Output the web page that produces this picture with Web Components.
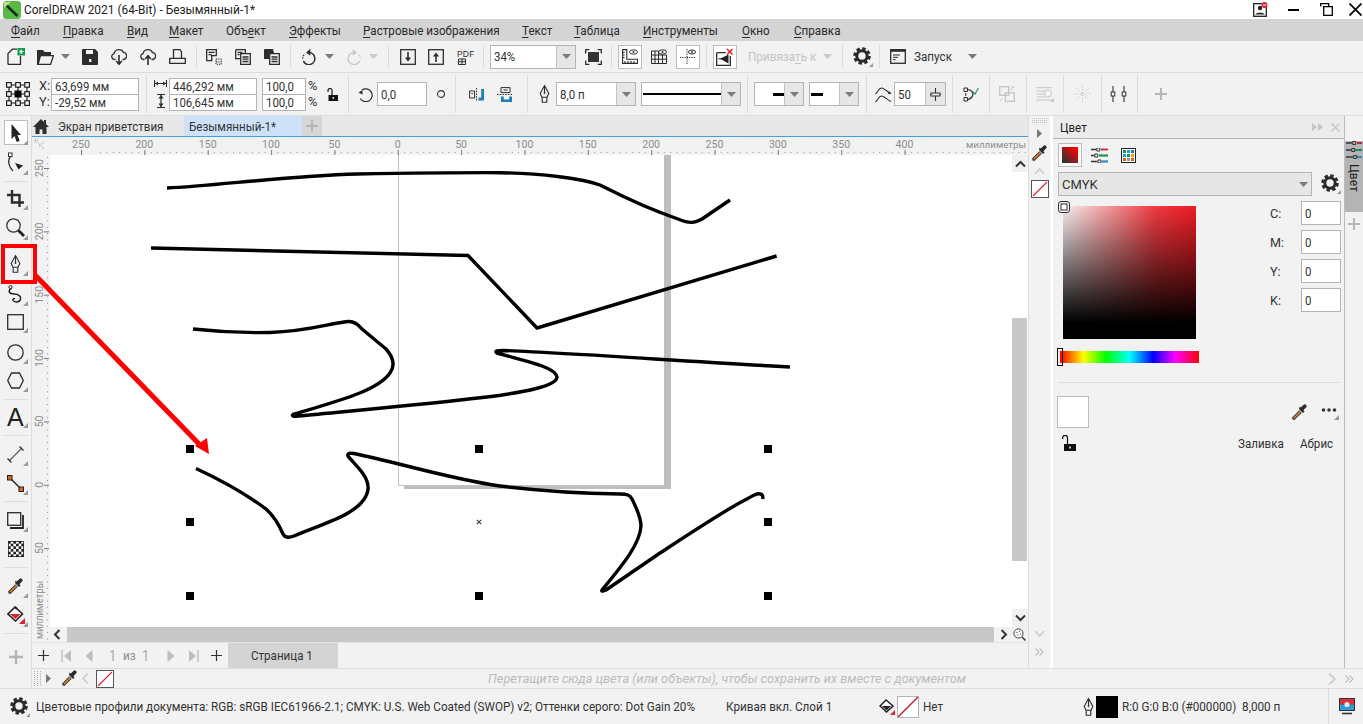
<!DOCTYPE html>
<html>
<head>
<meta charset="utf-8">
<title>CorelDRAW</title>
<style>
    html, body { margin: 0; padding: 0; width: 1363px; height: 724px; overflow: hidden; background: #f2f2f2; }
</style>
</head>
<body>
<cd-app></cd-app>
<script>
const D = '#2d2d2d';
const ln = `fill="none" stroke="${D}" stroke-width="1.3"`;
const dropper = `<path d="M2 15L9.5 7.5" stroke="#4a3018" stroke-width="3.4"/><path d="M2 15L9.5 7.5" stroke="#c98a4e" stroke-width="1.6"/><path d="M1 16l1.5-2.5 1 1z" fill="#333"/><path d="M8 5l4 4 1.6-1.6-1.2-1.2 2.6-2.6a1.8 1.8 0 0 0-2.6-2.6l-2.6 2.6-1.2-1.2z" fill="#2b2b2b"/>`;

const ICONS = {
    tri: [ 9, 5, `<path d="M0 0h9L4.5 5z" fill="#7b7b7b"/>` ],
    triL: [ 9, 5, `<path d="M0 0h9L4.5 5z" fill="#c9c9c9"/>` ],
    new: [ 18, 17, `<path d="M1 16.5V5.5L5.5 1.2H10M13.5 8v8.5H1" ${ln}/><rect x="10.5" y="0" width="7.5" height="7.5" fill="#0f9d4c"/><path d="M14.2 1.5v4.5M12 3.7h4.5" stroke="#fff" stroke-width="1.3"/>` ],
    open: [ 17, 16, `<path d="M0 16V1h6l1.5 2H14v3H4.3L1.6 16z" fill="${D}"/><path d="M3.8 6.7H16.4L13.6 15.4H1" ${ln}/>` ],
    save: [ 16, 16, `<path d="M1 0h12l3 3v12a1 1 0 0 1-1 1H1a1 1 0 0 1-1-1V1a1 1 0 0 1 1-1z" fill="${D}"/><rect x="4" y="1" width="7" height="4" fill="#f2f2f2"/><rect x="7" y="10" width="2.4" height="3" fill="#f2f2f2"/>` ],
    cloudD: [ 16, 17, `<path d="M4.5 11.5H3.6A3 3 0 0 1 3 5.6a5 5 0 0 1 9.4-1.2 3.6 3.6 0 0 1 .4 7.1h-1.3" ${ln}/><path d="M8 7v9M5.2 13l2.8 3.2 2.8-3.2" fill="none" stroke="${D}" stroke-width="1.6"/>` ],
    cloudU: [ 16, 17, `<path d="M4.5 11.5H3.6A3 3 0 0 1 3 5.6a5 5 0 0 1 9.4-1.2 3.6 3.6 0 0 1 .4 7.1h-1.3" ${ln}/><path d="M8 17V8M5.2 11l2.8-3.2 2.8 3.2" fill="none" stroke="${D}" stroke-width="1.6"/>` ],
    print: [ 17, 15, `<path d="M4.5 9V.7h6.5l1.5 2V9M.7 9.4h15.6v5H.7z" ${ln}/>` ],
    doc1: [ 16, 16, `<path d="M.7.7h9.6v6H5.7v5H.7zM2.5 3.4h6M2.5 5.6h3" ${ln}/><path d="M10 10h5.3v5.3H10zM10 13h5" fill="none" stroke="${D}" stroke-dasharray="1.3 1"/>` ],
    doc2: [ 16, 16, `<path d="M.7.7h9.6V4M.7.7v9H5" ${ln}/><path d="M5.7 4.7h9.6v10.6H5.7zM7.5 8h6M7.5 10.2h6M7.5 12.5h6M2.5 3.4h5M2.5 5.6h2" ${ln}/>` ],
    doc3: [ 16, 16, `<path d="M0 1a1 1 0 0 1 1-1h8l1 4H5v6H0z" fill="${D}"/><path d="M5.7 4.7h9.6v10.6H5.7zM7.5 8h6M7.5 10.2h6M7.5 12.5h6" ${ln}/>` ],
    undo: [ 17, 16, `<path d="M8 3.6a6 6 0 1 1-5.6 8.6" fill="none" stroke="${D}" stroke-width="1.5"/><path d="M1.6 9.5A6 6 0 0 1 4 5" fill="none" stroke="${D}" stroke-width="1.3" stroke-dasharray="1.3 1.2"/><path d="M9.3 0L5 3.4l4.3 3.4z" fill="${D}"/>` ],
    redo: [ 17, 16, `<path d="M9 3.6a6 6 0 1 0 5.6 8.6" fill="none" stroke="#c9c9c9" stroke-width="1.5"/><path d="M15.4 9.5A6 6 0 0 0 13 5" fill="none" stroke="#c9c9c9" stroke-width="1.3" stroke-dasharray="1.3 1.2"/><path d="M7.7 0L12 3.4 7.7 6.8z" fill="#c9c9c9"/>` ],
    imp: [ 16, 16, `<rect x=".7" y=".7" width="14.6" height="14.6" ${ln}/><path d="M8 3v8" stroke="${D}" stroke-width="1.6"/><path d="M4.8 8.5L8 12.5l3.2-4z" fill="${D}"/>` ],
    exp: [ 16, 16, `<rect x=".7" y=".7" width="14.6" height="14.6" ${ln}/><path d="M8 13V5" stroke="${D}" stroke-width="1.6"/><path d="M4.8 7.5L8 3.5l3.2 4z" fill="${D}"/>` ],
    pdf: [ 17, 16, `<text x="0" y="7.5" font-family="Liberation Sans, sans-serif" font-size="8.5" letter-spacing=".2" fill="${D}">PDF</text><path d="M1.5 10h7v5.5h-7zM5 9.5v6M1.5 12.7h7" fill="none" stroke="${D}"/>` ],
    fit: [ 17, 16, `<path d="M.7 4.5V.7h3.6M12.7.7h3.6v3.8M16.3 11.5v3.8h-3.6M4.3 15.3H.7v-3.8" ${ln}/><rect x="3" y="3" width="11" height="10" fill="#333"/>` ],
    rul: [ 16, 15, `<path d="M.6.6h4.2v9.6h10.6v4.2H.6zM.6 3.5h2M.6 6h2M.6 8.5h2M3 14v-2M6 14v-2M9 14v-2M12 14v-2" fill="none" stroke="${D}" stroke-width="1.1"/><ellipse cx="11.5" cy="3" rx="4" ry="2.2" fill="none" stroke="${D}"/><circle cx="11.5" cy="3" r="1" fill="${D}"/>` ],
    gridi: [ 16, 15, `<path d="M.5 2v12.5h15V6M4 2v12.5M7.5 2v12.5M11.5 6v8.5M.5 6h15M.5 10.2h15M.5 2h7" fill="none" stroke="${D}" stroke-width="1"/><ellipse cx="11.5" cy="3" rx="4" ry="2.2" fill="none" stroke="${D}"/><circle cx="11.5" cy="3" r="1" fill="${D}"/>` ],
    guide: [ 16, 15, `<path d="M7 0v15M0 8.5h15" fill="none" stroke="${D}" stroke-dasharray="1.2 1.1"/><ellipse cx="12" cy="3" rx="3.6" ry="2" fill="none" stroke="${D}"/><circle cx="12" cy="3" r=".9" fill="${D}"/>` ],
    snapx: [ 18, 18, `<path d="M.7 4.7h9M14.3 8v9.3H.7V4.7" ${ln}/><path d="M12.5 6.5v9L4 10.8z" fill="#222"/><path d="M11 1l5.5 5.5M16.5 1L11 6.5" stroke="#e4212b" stroke-width="1.5"/><path d="M2.5 10.8h3" stroke="#222"/>` ],
    gear: [ 20, 20, `<circle cx="9" cy="9" r="5.2" fill="none" stroke="#2b2b2b" stroke-width="3"/><circle cx="9" cy="9" r="7.4" fill="none" stroke="#2b2b2b" stroke-width="2.8" stroke-dasharray="3.4 2.41"/><path d="M20 16v4h-4z" fill="#9a9a9a"/>` ],
    panel: [ 16, 15, `<rect x=".7" y=".7" width="14.6" height="13.6" ${ln}/><path d="M.7 1.6h14.6" stroke="${D}" stroke-width="2.4"/><path d="M3 6h7M3 8.3h5M3 10.6h2.5" stroke="${D}"/>` ],
    ref: [ 24, 24, `<g fill="#f2f2f2" stroke="#111" stroke-width="1.1"><path d="M3 3h18M3 12h18M3 21h18M3 3v18M12 3v18M21 3v18" fill="none"/><rect x=".6" y=".6" width="4.6" height="4.6"/><rect x="9.7" y=".6" width="4.6" height="4.6"/><rect x="18.8" y=".6" width="4.6" height="4.6"/><rect x=".6" y="9.7" width="4.6" height="4.6"/><rect x="18.8" y="9.7" width="4.6" height="4.6"/><rect x=".6" y="18.8" width="4.6" height="4.6"/><rect x="9.7" y="18.8" width="4.6" height="4.6"/><rect x="18.8" y="18.8" width="4.6" height="4.6"/><rect x="9" y="9" width="6" height="6" fill="#000"/></g>` ],
    sizeH: [ 13, 7, `<path d="M.5 0v7M12.5 0v7M.5 3.5h12" stroke="${D}" stroke-width="1.2"/><path d="M1 3.5l3-2v4zM12 3.5l-3-2v4z" fill="${D}"/>` ],
    sizeV: [ 8, 14, `<path d="M0 .5h8M0 13.5h8M4 .5v13" stroke="${D}" stroke-width="1.2"/><path d="M4 1l2.6 3.4H1.4zM4 13L1.4 9.6h5.2z" fill="${D}"/>` ],
    lock: [ 11, 13, `<path d="M1 4V2.5a2 2 0 0 1 4 0V7" fill="none" stroke="#111" stroke-width="1.2"/><rect x="1.5" y="7" width="9.5" height="6" fill="#111"/><rect x="5.6" y="9" width="1.4" height="1.8" fill="#f2f2f2"/>` ],
    lockB: [ 14, 16, `<path d="M.7 4V2.8a2.4 2.4 0 0 1 4.8 0V9" fill="none" stroke="#111" stroke-width="1.2"/><rect x="2" y="9" width="12" height="7" fill="#111"/><rect x="7.2" y="11.5" width="1.6" height="2" fill="#f2f2f2"/>` ],
    rot: [ 15, 15, `<path d="M4 3a6.4 6.4 0 1 1-1.8 8.5" fill="none" stroke="${D}" stroke-width="1.2"/><path d="M.5 5.5L4.5 7.5V3z" fill="${D}"/>` ],
    ring: [ 8, 8, `<circle cx="4" cy="4" r="3.4" fill="none" stroke="${D}" stroke-width="1.1"/>` ],
    mirH: [ 15, 13, `<path d="M.6 3h5v7h-5z" fill="none" stroke="${D}"/><path d="M7.5 0v13" stroke="${D}" stroke-dasharray="1.5 1.2"/><path d="M2.4 5.5h1.4" stroke="${D}"/><path d="M9.5 9.5h2.7V1H15v11.5H9.5z" fill="#1e7fb5"/>` ],
    mirV: [ 16, 15, `<path d="M4 .6h9v5H4z" fill="none" stroke="${D}"/><path d="M0 7.5h16" stroke="${D}" stroke-dasharray="1.5 1.2"/><path d="M6.5 3h4" stroke="${D}"/><path d="M4 9.5h2.8v3h5.4v-3H15V15H4z" fill="#1e7fb5"/>` ],
    pen: [ 11, 18, `<path d="M5.5.6L9.8 8.5 8 12.2H3L1.2 8.5zM5.5 1v6.5M3.2 12.2h4.6v5H3.2z" fill="none" stroke="${D}" stroke-width="1.1"/><circle cx="5.5" cy="8" r=".9" fill="${D}"/>` ],
    smooth: [ 17, 17, `<path d="M.6 8C3 5.5 4 2 6.5 2S11 5 14 6.4M.6 16C3 13.5 4 10 6.5 10S11 13 16 15.5" fill="none" stroke="${D}" stroke-width="1.1"/><path d="M16.8 7.4l-3.8.8.9-3z" fill="${D}"/>` ],
    curv: [ 16, 15, `<path d="M1 1h3.5v3.5H1zM1 10.5h3.5V14H1zM2.8 6v3" fill="none" stroke="${D}"/><path d="M4.8 2.5C9 3 10.3 6 9.8 8c-.5 2-2 3.8-5 4.6" fill="none" stroke="${D}" stroke-width="1.2"/><path d="M10 5l2 2 3.5-6" fill="none" stroke="#1a9a50" stroke-width="1.1"/>` ],
    weld: [ 16, 16, `<g fill="none" stroke="#c4c4c4" stroke-width="1.3"><rect x=".7" y=".7" width="9" height="8.5"/><rect x="6.3" y="6.8" width="9" height="8.5"/></g><path d="M11.5 4.5L15 1M15 1h-3M.8 15l3-3" stroke="#c4c4c4"/>` ],
    para: [ 18, 15, `<path d="M.7.7h15M.7 4h8M.7 7h7M.7 10h8M.7 13h15" stroke="#c4c4c4"/><circle cx="12" cy="6.5" r="3.6" fill="none" stroke="#c4c4c4"/><path d="M18 11v4h-4z" fill="#c4c4c4"/>` ],
    dots: [ 17, 16, `<path d="M8.5 0v16M0 8h17M2.5 2.5l12 11M14.5 2.5l-12 11" stroke="#c4c4c4" stroke-dasharray="1.4 1.6"/>` ],
    slid: [ 17, 16, `<path d="M3 0v16M14 0v16" stroke="#333" stroke-width="1.1"/><rect x="1.2" y="6" width="3.6" height="4" fill="#f2f2f2" stroke="#333"/><rect x="12.2" y="6" width="3.6" height="4" fill="#f2f2f2" stroke="#333"/>` ],
    plusL: [ 12, 12, `<path d="M6 0v12M0 6h12" stroke="#b5b5b5" stroke-width="2"/>` ],
    plusM: [ 18, 18, `<path d="M9 2v14M2 9h14" stroke="#b5b5b5" stroke-width="2.4"/>` ],
    plusD: [ 11, 11, `<path d="M5.5 0v11M0 5.5h11" stroke="#333" stroke-width="1.2"/>` ],
    spin: [ 13, 13, `<path d="M6.5 0v13M1 6.5h11" stroke="#333" stroke-width="1.1"/><rect x="2" y="5" width="9" height="3" fill="#e6e6e6" stroke="#333" stroke-width="1"/>` ],
    home: [ 16, 15, `<path d="M8 0L0 8h2.5v7h4v-4.5h3V15h4V8H16l-3-3V1h-2v2z" fill="#2d2d2d"/>` ],
    select: [ 10, 18, `<path d="M.5 0v15l3-3 2.2 6 3-1.2-2.2-5.8H10z" fill="#222"/>` ],
    shape: [ 17, 20, `<path d="M3.5 4C0 9 2 15 6 19" fill="none" stroke="#333" stroke-width="1.3"/><rect x="1.5" y="1" width="3.6" height="3.6" fill="#fff" stroke="#333"/><path d="M8 11l8 2.5-4.5 4z" fill="#222"/>` ],
    crop: [ 17, 17, `<path d="M5 0v12.5h12M0 5h12.5v12" fill="none" stroke="#2b2b2b" stroke-width="2.4"/>` ],
    zoom: [ 19, 19, `<circle cx="7.5" cy="7.5" r="6.7" fill="none" stroke="#333" stroke-width="1.3"/><path d="M12.5 12.5l5.5 5.5" stroke="#222" stroke-width="2.8"/>` ],
    curve: [ 15, 18, `<circle cx="2.5" cy="2" r="1.6" fill="none" stroke="#222"/><path d="M3.5 3.4C-1 6 1.5 9 6 9c4.5 0 7.5 2.5 6.5 5.5-1 3-6.5 3.2-7.5 .8-.5-1.3 1-2 2-1.5" fill="none" stroke="#222" stroke-width="1.5"/>` ],
    rect: [ 17, 16, `<rect x=".7" y=".7" width="15.6" height="14.6" ${ln}/>` ],
    ell: [ 17, 17, `<circle cx="8.5" cy="8.5" r="7.7" ${ln}/>` ],
    poly: [ 17, 17, `<path d="M4.5 1h8L16.3 8.5l-3.8 7.5h-8L.7 8.5z" ${ln}/>` ],
    A: [ 18, 29, `<text x="0" y="23" font-family="Liberation Sans, sans-serif" font-size="25" fill="#222">A</text>` ],
    dim: [ 17, 17, `<path d="M2 15L15 2" stroke="#555" stroke-width="1.1"/><path d="M.5 12.5l4 4M12.5.5l4 4" stroke="#333" stroke-width="1.3"/>` ],
    conn: [ 17, 17, `<path d="M3 3l11 11" stroke="#222" stroke-width="1.4"/><rect x=".5" y=".5" width="4.5" height="4.5" fill="#d96a1c" stroke="#222"/><rect x="12" y="12" width="4.5" height="4.5" fill="#d96a1c" stroke="#222"/>` ],
    shad: [ 17, 17, `<rect x=".7" y=".7" width="13" height="12.6" ${ln}/><path d="M16 3v13H3" fill="none" stroke="#222" stroke-width="1.8"/>` ],
    transp: [ 16, 16, `<defs><pattern id="ck" width="5.34" height="5.34" patternUnits="userSpaceOnUse"><rect width="5.34" height="5.34" fill="#fff"/><rect width="2.67" height="2.67" fill="#222"/><rect x="2.67" y="2.67" width="2.67" height="2.67" fill="#222"/></pattern></defs><rect width="16" height="16" fill="url(#ck)"/><rect x=".4" y=".4" width="15.2" height="15.2" fill="none" stroke="#222" stroke-width=".8"/>` ],
    drop: [ 17, 17, dropper ],
    fill: [ 18, 18, `<path d="M8 1L1 8l7.5 7L15.5 8z" fill="#fff" stroke="#222" stroke-width="1.6"/><path d="M3 8h10.5l-5 5z" fill="#d9202b"/><path d="M8 1l2 2" stroke="#222" stroke-width="2"/><path d="M18 18h-6l6-6z" fill="#d9202b"/>` ],
    fly: [ 5, 5, `<path d="M5 0v5H0z" fill="#9a9a9a"/>` ],
    next: [ 8, 12, `<path d="M.5 0L7.5 6 .5 12z" fill="#bdbdbd"/>` ],
    prev: [ 8, 12, `<path d="M7.5 0L.5 6l7 6z" fill="#bdbdbd"/>` ],
    first: [ 11, 12, `<path d="M1 0v12" stroke="#bdbdbd" stroke-width="1.4"/><path d="M10 0L3 6l7 6z" fill="#bdbdbd"/>` ],
    last: [ 11, 12, `<path d="M10 0v12" stroke="#bdbdbd" stroke-width="1.4"/><path d="M1 0l7 6-7 6z" fill="#bdbdbd"/>` ],
    tr: [ 5, 9, `<path d="M0 0l5 4.5L0 9z" fill="#777"/>` ],
    dots2: [ 7, 15, `<path d="M.5 0v15M3.5 0v15M6.5 0v15" stroke="#b0b0b0" stroke-dasharray="1 1"/>` ],
    dotsH: [ 15, 5, `<path d="M0 .5h15M0 2.5h15M0 4.5h15" stroke="#c0c0c0" stroke-dasharray="1 1"/>` ],
    chevL: [ 7, 11, `<path d="M6 .5L1 5.5l5 5" fill="none" stroke="#ccc" stroke-width="1.6"/>` ],
    chevLD: [ 8, 11, `<path d="M6.5 1L2 5.5 6.5 10" fill="none" stroke="#333" stroke-width="2"/>` ],
    chevRD: [ 8, 11, `<path d="M1.5 1L6 5.5 1.5 10" fill="none" stroke="#333" stroke-width="2"/>` ],
    chevUD: [ 11, 8, `<path d="M1 6.5L5.5 2 10 6.5" fill="none" stroke="#333" stroke-width="2"/>` ],
    chevDD: [ 11, 8, `<path d="M1 1.5L5.5 6 10 1.5" fill="none" stroke="#333" stroke-width="2"/>` ],
    chevUL: [ 11, 8, `<path d="M1 7L5.5 2 10 7" fill="none" stroke="#ccc" stroke-width="1.6"/>` ],
    chevDL: [ 11, 8, `<path d="M1 1l4.5 5L10 1" fill="none" stroke="#ccc" stroke-width="1.6"/>` ],
    chevRL: [ 8, 12, `<path d="M1 .5L7 6l-6 5.5" fill="none" stroke="#ccc" stroke-width="1.8"/>` ],
    dbl: [ 9, 8, `<path d="M.5.5L4 4 .5 7.5M4.5.5L8 4 4.5 7.5" fill="none" stroke="#bdbdbd" stroke-width="1.1"/>` ],
    dblF: [ 11, 8, `<path d="M0 0l5 4-5 4zM6 0l5 4-5 4z" fill="#c4c4c4"/>` ],
    xL: [ 9, 9, `<path d="M.5.5l8 8M8.5.5l-8 8" stroke="#c4c4c4" stroke-width="1.3"/>` ],
    magn: [ 13, 13, `<circle cx="5.5" cy="5.5" r="4.6" fill="none" stroke="#444"/><path d="M9 9l3.5 3.5" stroke="#444" stroke-width="1.6"/><path d="M3.5 4.5h.8M6 3.5h.8M4.5 7h.8M7 6h.8" stroke="#444"/>` ],
    none: [ 18, 18, `<rect x=".5" y=".5" width="17" height="17" fill="#fff" stroke="#555"/><path d="M2 16L16 2" stroke="#e02030" stroke-width="1.1"/>` ],
    noneB: [ 22, 22, `<rect x=".5" y=".5" width="21" height="21" fill="#fff" stroke="#b5b5b5"/><path d="M1 21L21 1" stroke="#c5202a" stroke-width="1.5"/>` ],
    tabs: [ 18, 18, `<path d="M1 2h6M12 2h5M1 9h5M10 9h7M1 16h7M12 16h5" stroke="#333" stroke-width="1.4"/><path d="M12 2h5" stroke="#d9202b" stroke-width="1.6"/><path d="M10 9h7" stroke="#0f9d4c" stroke-width="1.6"/><path d="M12 16h5" stroke="#1e9bd8" stroke-width="1.6"/><path d="M7.7.5h3v3h-3zM6.7 7.5h3v3h-3zM8.7 14.5h3v3h-3z" fill="none" stroke="#333"/>` ],
    sliders: [ 17, 15, `<path d="M0 1.5h5M10 1.5h2M0 7.5h3M8 7.5h9M0 13.5h6M11 13.5h6" stroke="#333" stroke-width="1.5"/><path d="M11 1.5h6" stroke="#d9202b" stroke-width="1.8"/><path d="M8 7.5h9" stroke="#0f9d4c" stroke-width="1.8"/><path d="M11 13.5h6" stroke="#1e9bd8" stroke-width="1.8"/><path d="M5.8 0h3v3h-3zM3.8 6h3v3h-3zM7 12h3v3H7z" fill="none" stroke="#333"/>` ],
    palette: [ 15, 15, `<rect x=".5" y=".5" width="14" height="14" fill="#fff" stroke="#222"/><path d="M2 2h3v3H2z" fill="#0f9d4c"/><path d="M6 2h3v3H6z" fill="#1e9bd8"/><path d="M10 2h3v3h-3z" fill="#1e7fb5"/><path d="M2 6h3v3H2z" fill="#1e9bd8"/><path d="M6 6h3v3H6z" fill="#0f9d4c"/><path d="M10 6h3v3h-3z" fill="#e6a020"/><path d="M2 10h3v3H2z" fill="#d96a1c"/><path d="M6 10h3v3H6z" fill="#999"/><path d="M10 10h3v3h-3z" fill="#d96a1c"/>` ],
    grad: [ 16, 16, `<defs><linearGradient id="gr" x1="0" y1="1" x2="1" y2="0"><stop offset=".1" stop-color="#333"/><stop offset=".9" stop-color="#f00"/></linearGradient></defs><rect width="16" height="16" fill="url(#gr)"/>` ],
    sq: [ 12, 12, `<rect x=".5" y=".5" width="11" height="11" rx="2.5" fill="#f2f2f2" stroke="#333"/><rect x="3" y="3" width="6" height="6" fill="#fff" stroke="#333"/>` ],
    more: [ 18, 13, `<circle cx="2.5" cy="3" r="1.8" fill="#333"/><circle cx="8" cy="3" r="1.8" fill="#333"/><circle cx="13.5" cy="3" r="1.8" fill="#333"/><path d="M18 8v5h-5z" fill="#9a9a9a"/>` ],
    fillS: [ 16, 16, `<path d="M7 1L1 7l6.5 6L14 7z" fill="#fff" stroke="#222" stroke-width="1.5"/><path d="M3 7h9l-4.5 4.5z" fill="#222"/><path d="M16 16h-5l5-5z" fill="#d9202b"/>` ],
    monitor: [ 16, 17, `<rect x="0" y="0" width="16" height="13" fill="#333"/><rect x="1" y="1" width="14" height="5.5" fill="#d8323a"/><rect x="1" y="6.5" width="14" height="5.5" fill="#2f9ed8"/><circle cx="8" cy="6.5" r="2.6" fill="#fff" opacity=".8"/><path d="M3 15.5h10" stroke="#333" stroke-width="1.6"/>` ],
    wmin: [ 11, 2, `<rect width="11" height="2.4" fill="#000"/>` ],
    wmax: [ 13, 13, `<path d="M.7 3.5V.7h8v2.6M3.7 3.7h8.6v8.6H3.7z" fill="none" stroke="#000" stroke-width="1.3"/>` ],
    wclose: [ 13, 13, `<path d="M.5.5l12 12M12.5.5l-12 12" stroke="#000" stroke-width="1.8"/>` ],
    user: [ 15, 15, `<rect x=".7" y="1.7" width="12.6" height="12.6" fill="#fff" stroke="#222" stroke-width="1.3"/><circle cx="7" cy="6" r="2.2" fill="#222"/><path d="M2.5 12.5c0-2.5 9-2.5 9 0z" fill="#222"/><circle cx="11.5" cy="3" r="3" fill="#e4212b"/><path d="M9.8 3h3.4" stroke="#fff"/>` ],
    logo: [ 18, 18, `<rect width="18" height="18" rx="3.5" fill="#58b947"/><path d="M2.5 3.5L14.5 15" stroke="#1a2a12" stroke-width="2.6"/><path d="M1 1h7L1 7z" fill="#b7e08a"/>` ]
};

const svg = n => {
    const [ w, h, body ] = ICONS[ n ];
    return `<svg xmlns="http://www.w3.org/2000/svg" width="${w}" height="${h}" viewBox="0 0 ${w} ${h}" style="display:block">${body}</svg>`;
};

// items are placed by flow: each margin is worked out from the previous item's right edge
const row = items => {
    let cur = 0;
    return items.map(([ x, w, html, cls ]) => {
        const m = x - cur;
        cur = x + w;
        return `<span class="c ${cls || ''}" style="margin-left:${m}px;width:${w}px">${html}</span>`;
    }).join('');
};
const ico = (x, n, cls) => [ x, ICONS[ n ][ 0 ], svg( n ), cls ];
const sep = x => [ x, 1, '', 'sep' ];
const txt = (x, w, t, cls) => [ x, w, `<span class="x">${t}</span>`, 't ' + (cls || '') ];

const UI = '"Roboto", "Noto Sans", sans-serif';
// the reference is squeezed sideways, so text is drawn tall and narrowed with --sx
const ROW_CSS = `
    .c { flex: none; display: flex; align-items: center; justify-content: center; box-sizing: border-box; }
    .t { justify-content: flex-start; white-space: nowrap; }
    .x { display: inline-block; transform: scaleX(var(--sx, 1)); transform-origin: left center; white-space: nowrap; }
    .sep { align-self: stretch; background: #dcdcdc; }
    .tg { background: #fff; border: 1px solid #bdbdbd; }
`;

class Base extends HTMLElement {
    constructor() {
        super();
        this.attachShadow({ mode: 'open' });
    }
    connectedCallback() {
        this.shadowRoot.innerHTML = this.render();
    }
}

const field = (x, w, text, arrow, icon) => [ x, w, `<cd-field style="width:${w}px;height:24px" ${arrow ? `arrow="${arrow}"` : ''} ${icon ? `icon="${icon}"` : ''} ${text.startsWith( '<' ) ? 'raw' : ''}>${text}</cd-field>` ];

customElements.define( 'cd-field', class extends Base {
    render() {
        const a = this.getAttribute( 'arrow' );
        const icon = this.getAttribute( 'icon' ) || 'tri';
        const raw = this.hasAttribute( 'raw' );
        return `<style>
            :host { display: flex; box-sizing: border-box; border: 1px solid #b4b4b4; background: #fff; font: 13px ${UI}; color: #333; }
            .v { flex: 1; display: flex; align-items: center; padding-left: 3px; overflow: hidden; white-space: nowrap; min-width: 0; }
            .x { display: inline-block; transform-origin: left center; ${raw ? '' : 'transform: scaleX(.88);'} }
            .a { flex: none; background: #e6e6e6; border-left: 1px solid #c4c4c4; display: flex; align-items: center; justify-content: center; }
        </style><div class="v"><span class="x"><slot></slot></span></div>${a ? `<div class="a" style="width:${a}px">${svg( icon )}</div>` : ''}`;
    }
});

customElements.define( 'cd-title', class extends Base {
    render() {
        return `<style>
            :host { display: flex; height: 19px; background: #fff; align-items: center; font: 12.8px ${UI}; color: #222; position: relative; --sx: .93; }
            ${ROW_CSS}
        </style>${row([
            ico( 3, 'logo' ),
            txt( 24, 232, 'CorelDRAW 2021 (64-Bit) - Безымянный-1*' ),
            ico( 1253, 'user' ), ico( 1288, 'wmin' ), ico( 1320, 'wmax' ), ico( 1349, 'wclose' )
        ])}`;
    }
});

customElements.define( 'cd-menu', class extends Base {
    render() {
        return `<style>
            :host { display: flex; height: 22px; background: #d4d4d4; align-items: center; font: 12.6px ${UI}; color: #2a2a2a; --sx: .925; }
            ${ROW_CSS}
            u { text-underline-offset: 2px; }
        </style>${row([
            txt( 11, 30, '<u>Ф</u>айл' ), txt( 63, 41, '<u>П</u>равка' ), txt( 127, 20, '<u>В</u>ид' ), txt( 169, 35, '<u>М</u>акет' ),
            txt( 226, 41, 'Объ<u>е</u>кт' ), txt( 289, 52, '<u>Э</u>ффекты' ), txt( 363, 137, '<u>Р</u>астровые изображения' ), txt( 522, 30, '<u>Т</u>екст' ),
            txt( 574, 47, '<u>Т</u>аблица' ), txt( 643, 77, '<u>И</u>нструменты' ), txt( 742, 30, '<u>О</u>кно' ), txt( 794, 47, '<u>С</u>правка' )
        ])}`;
    }
});

customElements.define( 'cd-std', class extends Base {
    render() {
        return `<style>
            :host { display: flex; height: 31px; background: #f2f2f2; border-bottom: 1px solid #dcdcdc; align-items: center; font: 12.6px ${UI}; color: #333; --sx: .93; }
            ${ROW_CSS}
            .sep { margin: 4px 0; }
            .box { height: 24px; }
            .dis { color: #c4c4c4; }
            u { text-underline-offset: 2px; }
        </style>${row([
            ico( 7, 'new' ), ico( 37, 'open' ), ico( 61, 'tri' ), ico( 82, 'save' ), ico( 111, 'cloudD' ), ico( 140, 'cloudU' ), ico( 169, 'print' ),
            sep( 196 ), ico( 206, 'doc1' ), ico( 235, 'doc2' ), ico( 264, 'doc3' ),
            sep( 290 ), ico( 301, 'undo' ), ico( 325, 'tri' ), ico( 345, 'redo' ), ico( 369, 'triL' ),
            sep( 388 ), ico( 400, 'imp' ), ico( 428, 'exp' ), ico( 457, 'pdf' ),
            sep( 483 ), field( 490, 86, '34%', 18 ), ico( 585, 'fit' ),
            sep( 611 ), [ 618, 24, svg( 'rul' ), 'tg box' ], ico( 651, 'gridi' ), [ 676, 24, svg( 'guide' ), 'tg box' ],
            sep( 706 ), [ 713, 24, svg( 'snapx' ), 'tg box' ],
            txt( 748, 68, 'Привяза<u>т</u>ь к', 'dis' ), ico( 823, 'triL' ),
            sep( 842 ), ico( 853, 'gear' ),
            sep( 879 ), ico( 890, 'panel' ), txt( 914, 40, 'Запуск' ), ico( 968, 'tri' )
        ])}`;
    }
});

customElements.define( 'cd-prop', class extends Base {
    render() {
        const stack = (w, a, b) => `<cd-field style="width:${w}px;height:17px">${a}</cd-field><cd-field style="width:${w}px;height:17px;margin-top:-1px">${b}</cd-field>`;
        return `<style>
            :host { display: flex; height: 42px; background: #f2f2f2; border-bottom: 1px solid #dcdcdc; align-items: center; font: 12.8px ${UI}; color: #333; }
            ${ROW_CSS}
            .sep { margin: 2px 0; }
            .st { flex-direction: column; }
            .lb { flex-direction: column; align-items: flex-start; line-height: 16px; }
        </style>${row([
            ico( 6, 'ref' ), [ 39, 12, 'X:<br>Y:', 'lb' ], [ 51, 88, stack( 88, '63,699 мм', '-29,52 мм' ), 'st' ],
            sep( 146 ), [ 154, 13, svg( 'sizeH' ) + '<span style="height:7px"></span>' + svg( 'sizeV' ), 'st' ], [ 169, 88, stack( 88, '446,292 мм', '106,645 мм' ), 'st' ],
            [ 262, 44, stack( 44, '100,0', '100,0' ), 'st' ], [ 308, 12, '%<br>%', 'lb' ], ico( 327, 'lock' ),
            sep( 348 ), ico( 358, 'rot' ), field( 377, 50, '0,0' ), ico( 437, 'ring' ),
            sep( 455 ), ico( 469, 'mirH' ), ico( 497, 'mirV' ),
            sep( 527 ), ico( 539, 'pen' ), field( 556, 80, '8,0 п', 18 ),
            field( 641, 100, '<span style="display:block;width:80px;height:1.5px;background:#000;margin-left:-2px"></span>', 18 ),
            sep( 747 ), field( 754, 50, '<span style="display:block;width:12px;height:3px;background:#000;margin-left:15px"></span>', 18 ),
            field( 809, 50, '<span style="display:block;width:12px;height:3px;background:#000;margin-left:-2px"></span>', 18 ),
            sep( 866 ), ico( 875, 'smooth' ), field( 894, 52, '50', 19, 'spin' ),
            sep( 952 ), ico( 963, 'curv' ), sep( 989 ), ico( 999, 'weld' ), sep( 1026 ), ico( 1036, 'para' ), sep( 1063 ), ico( 1074, 'dots' ), sep( 1101 ), ico( 1110, 'slid' ), sep( 1137 ), ico( 1155, 'plusL' )
        ])}`;
    }
});

customElements.define( 'cd-toolbox', class extends Base {
    render() {
        const items = [
            [ 8, 'select', 1 ], [ 36, 'shape', 1 ], 65, [ 74, 'crop', 1 ], [ 102, 'zoom', 1 ], [ 139, 'pen', 1 ], [ 169, 'curve', 1 ], [ 198, 'rect', 1 ], [ 228, 'ell', 1 ], [ 256, 'poly', 1 ],
            283, [ 287, 'A', 1 ], 319, [ 330, 'dim', 1 ], [ 359, 'conn', 1 ], 385, [ 396, 'shad', 1 ], [ 425, 'transp' ], 451, [ 462, 'drop', 1 ], [ 490, 'fill', 1 ], 517, [ 532, 'plusM' ]
        ];
        let cur = 0;
        const html = items.map( it => {
            if ( typeof it === 'number' ) {
                const m = it - cur;
                cur = it + 1;
                return `<div class="s" style="margin-top:${m}px"></div>`;
            }
            const [ y, n, fly ] = it;
            const h = ICONS[ n ][ 1 ];
            const m = y - cur;
            cur = y + h;
            return `<div class="i ${n === 'A' ? 'big' : ''}" style="margin-top:${m}px;height:${h}px">${svg( n )}${fly ? `<span class="f">${svg( 'fly' )}</span>` : ''}</div>`;
        }).join( '' );
        return `<style>
            :host { display: flex; flex-direction: column; align-items: center; width: 32px; flex: none; box-sizing: border-box; border-right: 1px solid #dcdcdc; background: #f2f2f2; position: relative; }
            .i { display: flex; justify-content: center; align-items: center; width: 31px; position: relative; flex: none; }
            .f { position: absolute; right: 3px; bottom: -3px; }
            .big .f { bottom: 4px; }
            .s { width: 24px; height: 1px; background: #dcdcdc; flex: none; }
            .act { position: absolute; left: 4px; top: 4px; width: 24px; height: 25px; box-sizing: border-box; background: #fff; border: 1px solid #bdbdbd; }
        </style><div class="act"></div>${html}`;
    }
});

customElements.define( 'cd-tabs', class extends Base {
    render() {
        return `<style>
            :host { display: flex; height: 21px; background: #e8e8e8; border-bottom: 1.5px solid #3ea2dc; box-sizing: border-box; font: 12.6px ${UI}; color: #333; --sx: .92; }
            ${ROW_CSS}
            .on { background: #cde2f8; align-self: stretch; padding-left: 5px; }
            .add { background: #d6d6d6; align-self: stretch; }
        </style>${row([
            ico( 1, 'home' ), txt( 26, 106, 'Экран приветствия' ),
            txt( 152, 118, 'Безымянный-1*', 'on' ),
            [ 270, 20, svg( 'plusL' ), 'add' ]
        ])}`;
    }
});

customElements.define( 'cd-hruler', class extends Base {
    render() {
        // page coords: ruler starts at x=32
        let s = '';
        const labels = [ 250, 200, 150, 100, 50, 0, 50, 100, 150, 200, 250, 300, 350, 400 ];
        labels.forEach( (t, i) => {
            const x = 49 + i * 63.35;
            s += `<text x="${x}" y="11" text-anchor="middle">${t}</text><path d="M${x + 0.5} 13v5" stroke="#777"/>`;
        });
        for ( let x = 68; x < 994; x += 6.335 ) s += `<rect x="${x.toFixed( 1 )}" y="15" width="1" height="1" fill="#999"/>`;
        return `<style>
            :host { display: block; height: 18px; background: #f2f2f2; position: relative; }
            svg { display: block; font: 10.6px ${UI}; fill: #8c8c8c; }
        </style><svg width="996" height="18">
            <path d="M3 3l9 9M3 3h4M3 3v4M7 10l5-6" stroke="#999" stroke-dasharray="1 1" fill="none"/>
            ${s}<text x="934" y="11" font-size="9.8">миллиметры</text></svg>`;
    }
});

customElements.define( 'cd-vruler', class extends Base {
    render() {
        // page coords: ruler starts at y=155
        let s = '';
        const labels = [ 250, 200, 150, 100, 50, 0, 50 ];
        labels.forEach( (t, i) => {
            const y = 13 + i * 63.35;
            s += `<text transform="translate(11 ${y}) rotate(-90)" text-anchor="middle">${t}</text><path d="M12 ${y + 0.5}h5" stroke="#777"/>`;
        });
        for ( let y = 2; y < 485; y += 6.335 ) s += `<rect x="15" y="${y.toFixed( 1 )}" width="1" height="1" fill="#999"/>`;
        return `<style>
            :host { display: block; width: 18px; flex: none; background: #f2f2f2; }
            svg { display: block; font: 10.6px ${UI}; fill: #8c8c8c; }
        </style><svg width="18" height="487">
            ${s}<text transform="translate(11 484) rotate(-90)" font-size="11" textLength="58" lengthAdjust="spacingAndGlyphs">миллиметры</text></svg>`;
    }
});

customElements.define( 'cd-canvas', class extends Base {
    render() {
        const hs = [ [ 190, 449 ], [ 479, 449 ], [ 768, 449 ], [ 190, 522 ], [ 768, 522 ], [ 190, 596 ], [ 479, 596 ], [ 768, 596 ] ]
            .map( ([ x, y ]) => `<rect x="${x - 4}" y="${y - 4}" width="8" height="8"/>` ).join( '' );
        return `<style>
            :host { display: block; width: 962px; height: 472px; flex: none; background: #fff; overflow: hidden; }
            svg { display: block; }
        </style><svg width="962" height="472" viewBox="50 155 962 472">
            <path d="M664 155h7v334H404v-4h260z" fill="#bebebe"/>
            <path d="M398.5 155v330.5H664" fill="none" stroke="#c4c4c4"/>
            <g fill="none" stroke="#000" stroke-width="3.4" stroke-linejoin="round">
                <path d="M167 188C215 186 285 176 357 174C400 173.3 460 172.5 500 172.7C540 173.5 580 178 600 185C612 191 640 206 678 219C690 224 695 223 702 219L730 200"/>
                <path d="M151 248L468 255.5L537 328L776.6 256"/>
                <path d="M193 329C220 332 245 333 270 332.5C310 331 330 323 348 321.5C354 321 358 324 362 329L386 349C394 358 395 366 390 373C378 390 345 399 293 414.5C291 416 294 416.5 298 416C360 410 430 404 487 397C525 392 557 386 557 377C555 366 520 360 497 353C494 351 497 350.5 504 350.5C570 353 680 361 790 367"/>
                <path d="M196 468.5C225 482 250 497 266 509C276 518 280 527 283 534C285 538 289 538 294 536C310 529 335 521 348 513C362 505 369 495 368 486C367 474 353 463 348 456C347 453 350 453 354 453.5C400 463 450 479 500 486C540 491 590 493.5 620 494C627 494 630 495 632 499C636 507 641 517 641 526C640 545 620 568 602 590C601 592 604 591 606 590L660 553C680 540 725 510 745 500C752 496 757 493 760 494C763 494 763 497 762.7 499"/>
            </g>
            <g fill="#000">${hs}</g>
            <path d="M476.8 519.8l4.4 4.4M481.2 519.8l-4.4 4.4" stroke="#444" stroke-width="1.2"/>
        </svg>`;
    }
});

customElements.define( 'cd-vscroll', class extends Base {
    render() {
        return `<style>
            :host { display: flex; flex-direction: column; width: 16px; flex: none; background: #fff; }
            .a { height: 17px; flex: none; display: flex; align-items: center; justify-content: center; background: #f0f0f0; }
            .th { height: 243px; width: 15px; background: #c8c8c8; flex: none; }
            .sp { flex: none; }
        </style><div class="a">${svg( 'chevUD' )}</div><div class="sp" style="height:146px"></div><div class="th"></div><div class="sp" style="height:48px"></div><div class="a" style="height:18px">${svg( 'chevDD' )}</div>`;
    }
});

customElements.define( 'cd-hscroll', class extends Base {
    render() {
        return `<style>
            :host { display: flex; height: 15px; background: #f2f2f2; align-items: center; flex: none; }
            ${ROW_CSS}
            .th { height: 15px; background: #c8c8c8; }
        </style>${row([
            ico( 3, 'chevLD' ), [ 17, 927, '', 'th' ], ico( 950, 'chevRD' ), ico( 963, 'magn' )
        ])}`;
    }
});

customElements.define( 'cd-pages', class extends Base {
    render() {
        return `<style>
            :host { display: flex; height: 26px; background: #f2f2f2; align-items: center; font: 12.6px ${UI}; color: #8a8a8a; border-top: 1px solid #e4e4e4; box-sizing: border-box; --sx: .92; }
            ${ROW_CSS}
            .tab { align-self: stretch; background: #d4d4d4; color: #333; justify-content: flex-start; padding-left: 23px; }
            .g { color: #aaa; font-size: 14px; }
        </style>${row([
            ico( 6, 'plusD' ), ico( 29, 'first' ), ico( 53, 'prev' ), txt( 77, 10, '1', 'g' ), txt( 91, 16, 'из' ), txt( 110, 10, '1', 'g' ),
            ico( 135, 'next' ), ico( 156, 'last' ), ico( 179, 'plusD' ), txt( 196, 110, 'Страница 1', 'tab' )
        ])}`;
    }
});

customElements.define( 'cd-docpal', class extends Base {
    render() {
        return `<style>
            :host { display: flex; height: 19px; background: #f2f2f2; align-items: center; border-top: 1px solid #dcdcdc; font: italic 12.75px ${UI}; color: #bcbcbc; }
            ${ROW_CSS}
        </style>${row([
            ico( 2, 'dots2' ), ico( 14, 'tr' ), ico( 29, 'drop' ), ico( 50, 'chevL' ), ico( 64, 'none' ),
            txt( 456, 480, 'Перетащите сюда цвета (или объекты), чтобы сохранить их вместе с документом' ),
            ico( 1296, 'chevRL' ), ico( 1313, 'dbl' )
        ])}`;
    }
});

customElements.define( 'cd-strip', class extends Base {
    render() {
        return `<style>
            :host { display: flex; flex-direction: column; align-items: center; width: 25px; flex: none; box-sizing: border-box; background: #f2f2f2; border-left: 1px solid #dcdcdc; border-right: 3px solid #fff; }
            .sp { flex: 1; }
            div { flex: none; }
        </style>
        <div style="margin-top:2px">${svg( 'dotsH' )}</div>
        <div style="margin-top:6px">${svg( 'tr' )}</div>
        <div style="margin-top:7px">${svg( 'drop' )}</div>
        <div style="margin-top:5px">${svg( 'chevUL' )}</div>
        <div style="margin-top:5px">${svg( 'none' )}</div>
        <div class="sp"></div>
        <div style="margin-bottom:10px">${svg( 'chevDL' )}</div>
        <div style="margin-bottom:12px">${svg( 'dbl' )}</div>`;
    }
});

customElements.define( 'cd-color', class extends Base {
    render() {
        const vals = [ 'C', 'M', 'Y', 'K' ].map( l => `<div class="v"><span>${l}:</span><cd-field style="width:40px;height:24px">0</cd-field></div>` ).join( '' );
        return `<style>
            :host { display: flex; flex-direction: column; width: 292px; flex: none; box-sizing: border-box; background: #f2f2f2; border-right: 1px solid #bcbcbc; font: 12.6px ${UI}; color: #333; --sx: .92; }
            ${ROW_CSS}
            .head { display: flex; align-items: center; justify-content: space-between; height: 22px; background: #ebebeb; border-bottom: 1px solid #b4b4b4; padding: 0 4px 0 7px; font-size: 12.6px; color: #222; }
            .hr { display: flex; align-items: center; gap: 8px; }
            .modes { display: flex; align-items: center; height: 24px; margin: 4px 0 0 5px; }
            .m1 { width: 24px; height: 24px; box-sizing: border-box; border: 1px solid #bdbdbd; background: #f8f8f8; display: flex; align-items: center; justify-content: center; margin-right: 9px; }
            .combo { display: flex; align-items: center; margin: 5px 0 0 5px; }
            .cb { width: 254px; height: 24px; box-sizing: border-box; border: 1px solid #b4b4b4; background: #e6e6e6; display: flex; align-items: center; padding: 0 3px; justify-content: space-between; font-size: 13px; }
            .pick { display: flex; margin-top: 5px; position: relative; height: 140px; }
            .sq { position: absolute; left: 5px; top: 0; }
            .g { width: 133px; height: 133px; margin: 5px 0 0 10px; flex: none; background: linear-gradient(to bottom, rgba(0,0,0,0) 0%, #000 88%), linear-gradient(to right, #f7f0f0, #ee3a40 70%, #ed1c24); }
            .vs { margin-left: 74px; display: flex; flex-direction: column; gap: 5px; width: 71px; }
            .v { display: flex; justify-content: space-between; align-items: center; height: 24px; }
            .hue { position: relative; height: 12px; width: 139px; margin: 10px 0 0 7px; background: linear-gradient(to right, #f00, #ff0 17%, #0f0 33%, #0ff 50%, #00f 67%, #f0f 83%, #f00); }
            .mk { position: absolute; left: -3px; top: -3px; width: 6px; height: 18px; box-sizing: border-box; border: 1px solid #111; }
            .l { height: 1px; background: #dcdcdc; margin: 19px 4px 0 5px; }
            .sw { display: flex; margin: 13px 0 0 4px; align-items: center; height: 32px; }
            .box { width: 32px; height: 32px; box-sizing: border-box; background: #fff; border: 1px solid #bdbdbd; }
            .bt { display: flex; align-items: center; height: 18px; margin-top: 6px; }
        </style>
        <div class="head"><span class="x">Цвет</span><span class="hr">${svg( 'dblF' )}${svg( 'xL' )}</span></div>
        <div class="modes"><span class="m1">${svg( 'grad' )}</span><span style="margin:0 13px 0 0">${svg( 'sliders' )}</span>${svg( 'palette' )}</div>
        <div class="combo"><div class="cb">CMYK${svg( 'tri' )}</div><span style="margin-left:9px">${svg( 'gear' )}</span></div>
        <div class="pick"><span class="sq">${svg( 'sq' )}</span><div class="g"></div><div class="vs">${vals}</div></div>
        <div class="hue"><span class="mk"></span></div>
        <div class="l"></div>
        <div class="sw"><div class="box"></div><span style="margin-left:202px">${svg( 'drop' )}</span><span style="margin:3px 0 0 13px">${svg( 'more' )}</span></div>
        <div class="bt">${row([ ico( 9, 'lockB' ), txt( 185, 46, 'Заливка' ), txt( 247, 36, 'Абрис' ) ])}</div>`;
    }
});

customElements.define( 'cd-dock-tabs', class extends Base {
    render() {
        return `<style>
            :host { display: flex; flex-direction: column; align-items: center; flex: none; width: 18px; background: #f2f2f2; font: 12px ${UI}; color: #222; }
            .t { width: 18px; height: 71px; margin-top: 25px; background: #b4b4b4; display: flex; flex-direction: column; align-items: center; }
            .r { writing-mode: vertical-rl; margin-top: 5px; line-height: 16px; }
            .a { margin-top: 6px; }
        </style><div class="t">${svg( 'tabs' )}<span class="r">Цвет</span></div><div class="a">${svg( 'plusL' )}</div>`;
    }
});

customElements.define( 'cd-status', class extends Base {
    render() {
        return `<style>
            :host { display: flex; height: 35px; background: #f2f2f2; border-top: 1px solid #dcdcdc; align-items: center; font: 12.6px ${UI}; color: #333; --sx: .93; }
            ${ROW_CSS}
            .blk { background: #000; height: 22px; }
        </style>${row([
            ico( 10, 'gear' ),
            txt( 36, 662, 'Цветовые профили документа: RGB: sRGB IEC61966-2.1; CMYK: U.S. Web Coated (SWOP) v2; Оттенки серого: Dot Gain 20%' ),
            txt( 726, 106, 'Кривая вкл. Слой 1' ), ico( 879, 'fillS' ), ico( 897, 'noneB' ), txt( 923, 22, 'Нет' ),
            ico( 1083, 'pen' ), [ 1096, 22, '', 'blk' ], txt( 1122, 152, 'R:0 G:0 B:0 (#000000) &nbsp;8,000 п' ),
            [ 1328, 1, '', 'sep' ], ico( 1339, 'monitor' )
        ])}`;
    }
});

customElements.define( 'cd-callout', class extends Base {
    render() {
        return `<style>
            :host { position: absolute; left: 0; top: 0; width: 240px; height: 480px; pointer-events: none; display: block; }
        </style><svg width="240" height="480" style="display:block">
            <rect x="3" y="246" width="32" height="36" fill="none" stroke="#f00" stroke-width="4"/>
            <path d="M35 275L201 446" stroke="#f00" stroke-width="5"/>
            <path d="M209 454L195 446 207 438z" fill="#f00"/>
        </svg>`;
    }
});

customElements.define( 'cd-app', class extends Base {
    render() {
        return `<style>
            :host { display: flex; flex-direction: column; width: 1363px; height: 724px; position: relative; overflow: hidden; }
            .work { display: flex; height: 572px; flex: none; }
            .rest { display: flex; flex-direction: column; flex: 1; min-width: 0; }
            .top { display: flex; height: 552px; flex: none; }
            .main { display: flex; flex-direction: column; width: 996px; flex: none; }
            .view { display: flex; flex: none; }
            .cv { display: flex; flex-direction: column; }
            .cr { display: flex; }
        </style>
        <cd-title></cd-title>
        <cd-menu></cd-menu>
        <cd-std></cd-std>
        <cd-prop></cd-prop>
        <div class="work">
            <cd-toolbox></cd-toolbox>
            <div class="rest">
                <div class="top">
                    <div class="main">
                        <cd-tabs></cd-tabs>
                        <cd-hruler></cd-hruler>
                        <div class="view">
                            <cd-vruler></cd-vruler>
                            <div class="cv">
                                <div class="cr"><cd-canvas></cd-canvas><cd-vscroll></cd-vscroll></div>
                                <cd-hscroll></cd-hscroll>
                            </div>
                        </div>
                        <cd-pages></cd-pages>
                    </div>
                    <cd-strip></cd-strip>
                    <cd-color></cd-color>
                    <cd-dock-tabs></cd-dock-tabs>
                </div>
                <cd-docpal></cd-docpal>
            </div>
        </div>
        <cd-status></cd-status>
        <cd-callout></cd-callout>`;
    }
});
</script>
</body>
</html>
